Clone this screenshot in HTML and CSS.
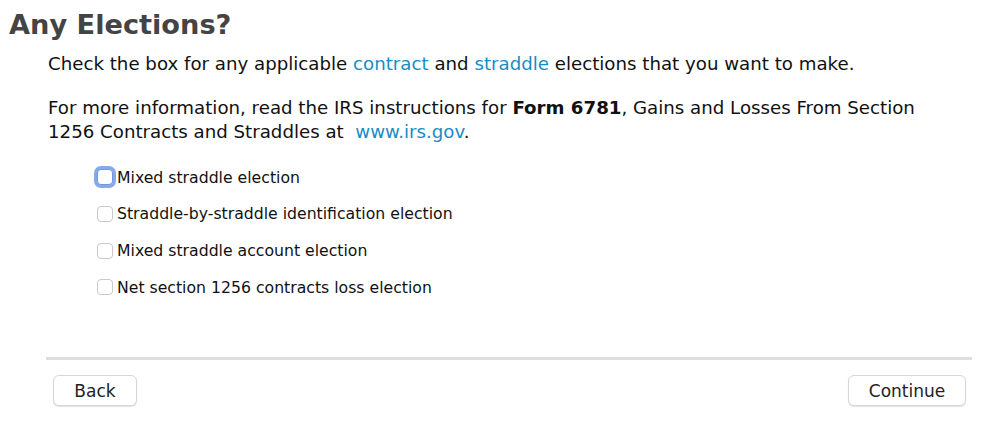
FILE: index.html
```html
<!DOCTYPE html>
<html>
<head>
<meta charset="utf-8">
<link rel="stylesheet" href="styles.css">
</head>
<body>
<div class="page">
  <h1 class="title">Any Elections?</h1>
  <div class="content">
    <p class="para">Check the box for any applicable <a class="link">contract</a> and <a class="link">straddle</a> elections that you want to make.</p>
    <p class="para">For more information, read the IRS instructions for <b>Form 6781</b>, Gains and Losses From Section 1256 Contracts and Straddles at &nbsp;<a class="link">www.irs.gov</a>.</p>
    <ul class="options">
      <li class="option"><span class="box focused"></span>Mixed straddle election</li>
      <li class="option"><span class="box"></span>Straddle-by-straddle identification election</li>
      <li class="option"><span class="box"></span>Mixed straddle account election</li>
      <li class="option"><span class="box"></span>Net section 1256 contracts loss election</li>
    </ul>
  </div>
  <div class="footer">
    <div class="sep"></div>
    <div class="buttons">
      <button class="btn back">Back</button>
      <button class="btn cont">Continue</button>
    </div>
  </div>
</div>
</body>
</html>
```
FILE: styles.css
```css
html, body { margin: 0; padding: 0; background: #fff; }
body { font-family: "DejaVu Sans", Verdana, sans-serif; color: #111; }
.page { width: 999px; height: 437px; position: relative; }
.title {
  margin: 0;
  padding: 8px 0 0 9px;
  font-size: 27.2px;
  line-height: 34px;
  font-weight: bold;
  color: #444;
}
.content { padding: 0 0 0 48px; width: 890px; }
.para {
  margin: 0;
  font-size: 18.2px;
  line-height: 24px;
}
.para:first-child { margin-top: 10px; margin-bottom: 20px; }
.link { color: #1a8bc5; }
.options { list-style: none; margin: 15px 0 0 49px; padding: 0; }
.option {
  display: flex;
  align-items: center;
  height: 36.67px;
  font-size: 15.7px;
  color: #111;
}
.box {
  width: 16px;
  height: 16px;
  border: 1px solid #c9c9c9;
  border-radius: 4px;
  box-sizing: border-box;
  margin-right: 4px;
  background: #fff;
}
.box.focused {
  box-shadow: 0 0 0 3px #86a9ea;
  border-color: #7098e0;
}
.footer { position: absolute; left: 0; right: 0; top: 357px; }
.sep { margin: 0 27px 0 46px; height: 3px; background: #dedede; }
.buttons {
  display: flex;
  justify-content: space-between;
  padding: 15px 33px 0 53px;
}
.btn {
  font-family: "DejaVu Sans", Verdana, sans-serif;
  font-size: 17px;
  color: #222;
  background: #fff;
  border: 1px solid #d6d6d6;
  border-radius: 6px;
  height: 31px;
  box-shadow: 0 1px 1px rgba(0,0,0,0.12);
  padding: 0;
}
.back { width: 84px; }
.cont { width: 118px; }
```
